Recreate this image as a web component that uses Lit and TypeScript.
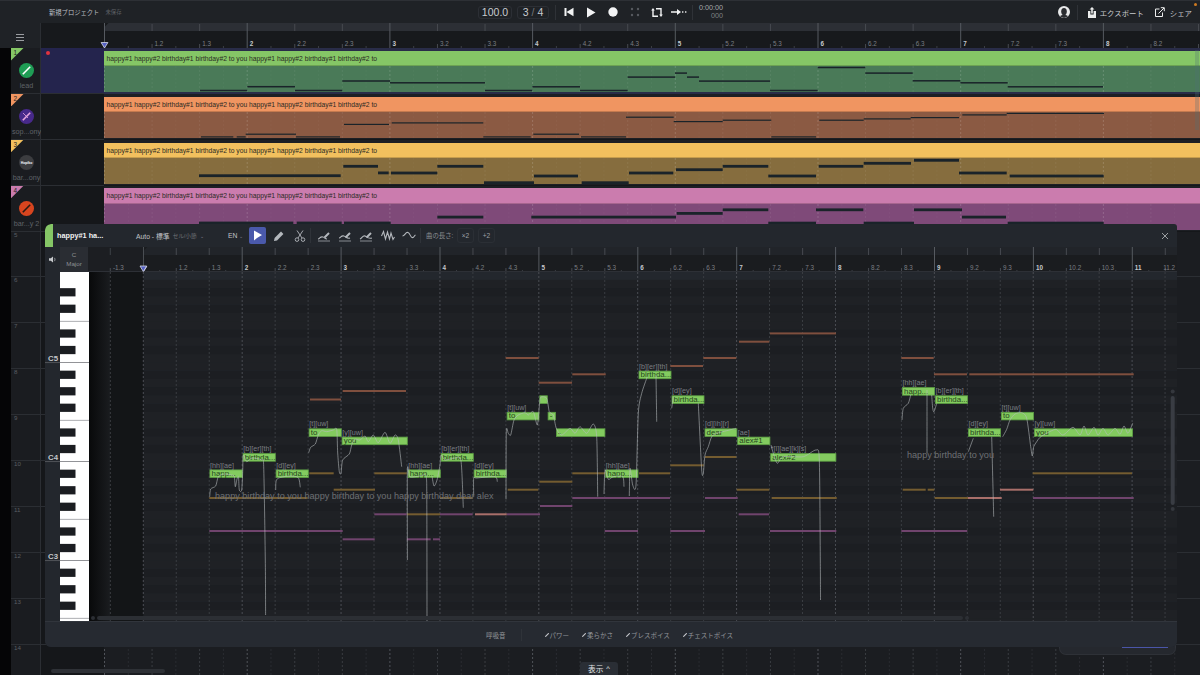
import { LitElement, html, css, svg } from 'lit';
import { customElement } from 'lit/decorators.js';

type Line = [number, number, number];

const LYRIC = 'happy#1 happy#2 birthday#1 birthday#2 to you happy#1 happy#2 birthday#1 birthday#2 to';

const TRACKS = [
  {
    name: 'lead', head: '#85c666', body: '#4a7a58', weight: 1.5, logo: '#1f9d55', slash: '#fff',
    notes: [[200, 247.3, 90.7], [247.3, 295, 86.9], [295, 342.3, 90.7], [342.3, 390, 81.2], [390, 485, 83], [485, 532.3, 90.7], [532.3, 580, 87], [580, 627.7, 90.7], [627.7, 675, 77.3], [675, 687, 73.3], [687, 699, 77.3], [699, 770, 81.3], [770, 817.7, 90.7], [817.7, 865.3, 67.7], [865.3, 912.7, 73.3], [912.7, 960.3, 81], [960.3, 1007.7, 83], [1007.7, 1103, 87]] as Line[],
  },
  {
    name: 'sop...ony', head: '#f09561', body: '#8b5a43', weight: 1.2, logo: '#47298a', slash: '#e7a6e0',
    notes: [[201, 233.3, 137], [236.7, 245.7, 137], [245.7, 296, 134.3], [296, 340, 137], [344, 389, 124.5], [391.7, 483.3, 123], [483.3, 530.7, 137], [533.3, 579, 134.3], [581, 626, 137], [626, 673.7, 117.3], [673.7, 722.7, 121.7], [722.7, 771.3, 120.3], [771.3, 816, 137], [819.3, 863.7, 120.3], [863.7, 910.7, 119], [910.7, 959, 117.7], [962.3, 1006.7, 115], [1006.7, 1104, 113.5]] as Line[],
  },
  {
    name: 'bar...ony', head: '#f2c05e', body: '#866d3e', weight: 2.8, logo: '#3c3d40', slash: '',
    notes: [[199, 340.7, 175.7], [343.3, 378, 166.3], [378, 388.7, 172.9], [391, 437.3, 173], [437.3, 483.3, 166.3], [484, 534, 182.7], [534, 578, 176], [581.7, 628.7, 182.7], [629, 673.3, 173], [676, 722.7, 169.7], [722.7, 768.3, 166.3], [768.3, 816, 176], [818.7, 863.3, 166.3], [863.7, 911, 163.3], [914, 959, 160.3], [959, 1006.7, 173], [1009.7, 1103.7, 176]] as Line[],
  },
  {
    name: 'bar...y 2', head: '#cb7cae', body: '#7f4a79', weight: 2.8, logo: '#d8451f', slash: '#2b1a12',
    notes: [[199, 293.3, 222.9], [296.7, 341.7, 222.9], [344, 390.7, 222.9], [437.3, 483.3, 217], [531.3, 676, 217], [676.7, 722.7, 213.3], [722.7, 768.3, 209.7], [768.3, 816, 223], [816, 863.3, 209.7], [863.7, 914, 223], [914, 962, 209.7], [962, 1006, 217], [1007.7, 1103.7, 223]] as Line[],
  },
];

// x0, x1, top, lyric, phonemes
const NOTES: [number, number, number, string, string][] = [
  [209.5, 242.7, 469.5, 'happ...', '[hh][ae]'],
  [242.7, 275.7, 453.2, 'birthda...', '[b][er][th]'],
  [275.7, 308.7, 469.5, 'birthda...', '[d][ey]'],
  [308.7, 341.7, 428.4, 'to', '[t][uw]'],
  [341.7, 407.7, 436.7, 'you', '[y][uw]'],
  [407.7, 440.7, 469.5, 'happ...', '[hh][ae]'],
  [440.7, 473.7, 453.2, 'birthda...', '[b][er][th]'],
  [473.7, 506.7, 469.5, 'birthda...', '[d][ey]'],
  [506.7, 539.4, 411.9, 'to', '[t][uw]'],
  [539.4, 547.7, 395.4, '', ''],
  [547.7, 556, 411.9, '-', ''],
  [556, 605.3, 428.4, '-', ''],
  [605.3, 638.4, 469.5, 'happ...', '[hh][ae]'],
  [638.6, 671.4, 370.7, 'birthda...', '[b][er][th]'],
  [671.6, 704.4, 395.4, 'birthda...', '[d][ey]'],
  [704.6, 737.3, 428.4, 'dear', '[d][ih][r]'],
  [737.3, 770.3, 436.7, 'alex#1', '[ae]'],
  [770.3, 836.3, 453.2, 'alex#2', '*[l][ae][k][s]'],
  [902, 935, 387.2, 'happ...', '[hh][ae]'],
  [935, 968, 395.4, 'birthda...', '[b][er][th]'],
  [968, 1001, 428.4, 'birthda...', '[d][ey]'],
  [1001, 1034, 411.9, 'to', '[t][uw]'],
  [1034, 1133, 428.4, 'you', '[y][uw]'],
];

const GHOSTS: Record<string, Line[]> = {
  '#7f4f3e': [[310, 341, 399.5], [342.7, 406, 391], [505.7, 538.7, 358], [538.7, 572, 382.7], [572.3, 605.7, 374.3], [670.3, 703, 366], [703.3, 736.3, 358], [739, 769.3, 341.7], [770, 836, 333.4], [901.3, 933.7, 358], [934, 967, 374.3], [969.3, 1133.7, 374.3]],
  '#745c30': [[309.3, 333.7, 473.3], [374.3, 406.7, 473.3], [333.7, 375, 489.7], [209.3, 307.7, 498], [406.7, 440, 514.3], [440, 472.3, 498], [507.7, 538.3, 489.7], [539.3, 572.3, 481.7], [572.3, 605.7, 473.3], [639, 670, 473.3], [670.3, 703.7, 465.3], [705, 736.3, 457], [736.7, 769.3, 489.7], [771.7, 836.7, 498], [902.7, 925.7, 489.7], [927.7, 934.3, 489.7], [934.7, 968, 498], [1032.7, 1132, 473.3]],
  '#70446d': [[374.3, 406.7, 514.3], [209.3, 342.7, 531], [342.7, 374.7, 539.3], [406.7, 430.7, 539.3], [433, 440, 539.3], [440, 472.7, 514.3], [506.7, 540, 514.3], [540, 572.3, 506], [572.3, 670, 498], [604.7, 638, 531], [670.3, 705, 531], [705, 737.7, 498], [738.7, 769, 514.3], [770, 836.3, 531], [901.3, 967.3, 531], [1033, 1133.7, 498]],
  '#a96f6a': [[475, 506.7, 514.3], [968, 1001.7, 498], [1000, 1033.3, 489.7]],
};

const PITCH: number[][][] = [
  [[209.7, 496.7], [210.7, 489], [215.7, 486], [218.3, 476.7], [224, 474], [231.7, 475], [234.3, 476.7], [235.3, 486.7], [237, 479], [238.5, 477], [239.3, 490], [241.7, 490], [242.7, 471.7], [243.3, 455], [246.7, 461.7], [252, 458], [261.7, 460], [263.7, 466.7], [265.3, 560], [265.6, 615]],
  [[275.7, 490], [276, 481.7], [278.7, 478], [290, 476], [298.3, 477.7], [300.3, 487.3]],
  [[308.7, 452.7], [310.7, 447.3], [315.3, 444], [318.3, 435], [321.7, 430.7], [326.7, 431.7], [333.3, 430], [336.7, 429.3], [337.7, 453], [339.3, 471.7], [341, 473.3], [342.7, 460], [349.3, 454], [351.7, 445], [355, 439.3], [360, 440], [365, 436], [368.3, 441.7], [373.3, 435], [378.3, 442.7], [385, 432.3], [390, 443.3], [395, 435], [398.3, 440], [401.7, 466.7]],
  [[407.4, 560], [407.4, 470], [410, 477], [420, 476], [426, 476], [426.8, 500], [427, 622]],
  [[432, 476], [434, 486], [437, 480], [440, 465], [441, 455], [445, 460], [455, 458], [461, 461], [463.3, 507.7]],
  [[473.7, 496.7], [473.7, 478.3], [476.7, 478], [495, 476.7], [497.3, 481.7]],
  [[506, 499.3], [506.3, 431.7], [508.3, 433.3], [510.7, 435], [514, 420], [518.3, 415], [525, 412.7], [528.3, 415], [533.3, 411.7], [537.3, 425], [539.3, 406.7], [540.7, 397.3], [546.7, 398.3], [549.3, 411.7], [553.3, 415], [556.3, 428.3], [561.7, 435], [570, 428.3], [575, 433.3], [580, 426.7], [586.7, 433.3], [593.3, 424], [596.7, 436.7], [597.7, 496.7]],
  [[604, 494], [605, 470], [608.3, 479.3], [613.3, 476.7], [622.7, 476.7], [624, 486.7]],
  [[629.3, 496], [630, 468.3], [632.7, 485], [636, 485], [638.3, 413.3], [641.7, 393.3], [647.3, 376.7]],
  [[656, 375], [656.7, 421.7]],
  [[671.7, 408.3], [673.3, 396.7]],
  [[698.3, 403.3], [701.7, 470], [703.3, 473.3], [705, 455], [708.3, 446.7], [711.7, 436.7], [716.7, 433.3], [726.7, 430.7], [736, 428.3]],
  [[771, 445], [773.3, 453.3], [777.3, 463.3], [783.3, 456.7], [803.3, 456.7], [816, 450], [819.3, 460], [820.3, 560], [820.5, 600]],
  [[902, 420], [903.3, 408.3], [908.3, 403.3], [910.7, 395]],
  [[927, 390], [927, 453]],
  [[931.7, 395], [932.7, 408.3], [934, 411.7], [936.7, 403.3]],
  [[968.3, 451.7], [973.3, 438.3]],
  [[991.7, 436.7], [993.7, 516.7]],
  [[1002.7, 436.7], [1006.7, 429.3], [1010, 420], [1015, 414], [1021.7, 412.7], [1026.7, 418.3], [1030.7, 446.7], [1032.3, 456], [1033.7, 446.7], [1036.7, 441.7], [1040, 437.3], [1046.7, 433.3], [1056, 429.3], [1063, 435], [1073, 427.3], [1080, 435], [1084, 426], [1088, 435], [1094, 427.3], [1098, 435], [1103, 428.3], [1108, 435], [1115, 428.3], [1120, 434.3], [1124, 426], [1128, 433.3], [1132.7, 423.3]],
];

const smooth = (p: number[][]) => {
  let d = `M${p[0][0]} ${p[0][1]}`;
  for (let i = 0; i < p.length - 1; i++) {
    const a = p[Math.max(i - 1, 0)], b = p[i], c = p[i + 1], e = p[Math.min(i + 2, p.length - 1)];
    d += `C${b[0] + (c[0] - a[0]) / 8} ${b[1] + (c[1] - a[1]) / 8} ${c[0] - (e[0] - b[0]) / 8} ${c[1] - (e[1] - b[1]) / 8} ${c[0]} ${c[1]}`;
  }
  return d;
};

// dashed bar lines for the arrangement view
const arrangeGrid = (y0: number, y1: number, bar: string, beat: string, half: string) => {
  const out = [];
  for (let i = 0; i < 46; i++) {
    const x = 104.5 + i * 23.783;
    const color = i % 6 === 0 ? bar : i % 2 === 0 ? beat : half;
    out.push(svg`<line x1=${x} x2=${x} y1=${y0} y2=${y1} stroke=${color} stroke-dasharray="2 2"></line>`);
  }
  return out;
};

const ruler = (x0: number, bw: number, bars: number, y0: number, h: number, band: string, low: string, xmax: number) => {
  const parts = [];
  const beat = bw / 3;
  parts.push(svg`<rect x=${x0 - 60} y=${y0} width="1400" height=${h} fill=${low}></rect>`);
  parts.push(svg`<polygon points="${x0},${y0 + 8} ${x0},${y0 + 4} ${x0 + 4},${y0} 1300,${y0} 1300,${y0 + 8}" fill=${band}></polygon>`);
  for (let b = 1; b <= bars; b++) {
    for (let i = 0; i < 3; i++) {
      const x = x0 + (b - 1) * bw + i * beat;
      if (x > xmax) continue;
      if (i === 0) {
        parts.push(svg`<line x1=${x} x2=${x} y1=${y0} y2=${y0 + h} stroke="#565a60"></line>`);
        if (b > 1) parts.push(svg`<text x=${x + 2.5} y=${y0 + 23} class="rl major">${b}</text>`);
      } else {
        parts.push(svg`<line x1=${x} x2=${x} y1=${y0 + 1} y2=${y0 + 8} stroke="#474a50"></line>`);
        parts.push(svg`<line x1=${x} x2=${x} y1=${y0 + h - 4} y2=${y0 + h} stroke="#474a50"></line>`);
        const fits = x + 15 < xmax;
        if (fits || xmax < 1190) {
          parts.push(svg`<text x=${fits ? x + 2.5 : x - 2} y=${y0 + 23} class="rl">${b}.${i + 1}</text>`);
        }
      }
      parts.push(svg`<line x1=${x + beat / 2} x2=${x + beat / 2} y1=${y0 + h - 2} y2=${y0 + h} stroke="#3c3f45"></line>`);
    }
  }
  parts.push(svg`<polygon points="${x0 - 3.4},${y0 + 19.5} ${x0 + 3.4},${y0 + 19.5} ${x0},${y0 + 25}" fill="#5661c4" stroke="#d6d9e6" stroke-width=".8"></polygon>`);
  return parts;
};

const pencilTool = (curve: string) => html`<svg width="16" height="12" viewBox="0 0 16 12" fill="none" stroke="#b4b8bd" stroke-width="1.1">
  <path d=${curve}></path><path d="M7.5 7.5L12 3" stroke-width="2"></path><path d="M1 11H13" stroke-width=".7"></path></svg>`;

@customElement('app-root')
export class AppRoot extends LitElement {
  static styles = css`
    :host {
      display: block;
      position: relative;
      width: 1200px;
      height: 675px;
      overflow: hidden;
      background: #1a1c20;
      font-family: 'Liberation Sans', 'Noto Sans CJK JP', sans-serif;
      color: #b8bbbf;
    }
    svg { display: block; flex: none; }
    .top {
      display: grid;
      grid-template-columns: 478px 1fr auto;
      height: 23px;
      box-sizing: border-box;
      background: #1f2226;
      border-top: 1px solid #2d3035;
      align-items: center;
    }
    .title { padding-left: 49px; font-size: 6.3px; color: #bcbfc3; display: flex; gap: 6px; align-items: center; }
    .title small { font-size: 5.4px; color: #5c5f64; }
    .transport { display: flex; align-items: center; }
    .box {
      height: 13px; box-sizing: border-box; border: 1px solid #2c2f35; border-radius: 3px;
      display: flex; align-items: center; justify-content: center; color: #c8cbcf; font-size: 10.5px;
    }
    .tempo { width: 34px; }
    .meter { width: 32px; margin-left: 5px; gap: 3px; }
    .meter i { color: #74777c; font-style: normal; }
    .sep { width: 1px; height: 15px; background: #2f3237; }
    .ctl { width: 22px; display: flex; justify-content: center; }
    .time { width: 25px; margin-left: 5px; text-align: right; font-size: 7.2px; line-height: 8px; color: #a5a8ac; }
    .time span { display: block; color: #7d8084; }
    .actions { display: flex; align-items: center; padding-right: 8px; font-size: 7.4px; color: #c8cbcf; }
    .actions .sep { margin: 0 9px 0 7px; }
    .act { display: flex; align-items: center; gap: 3px; }
    .act + .act { margin-left: 11px; gap: 5px; }
    .badge { position: absolute; left: 1194px; top: 3px; width: 3px; height: 3px; border-radius: 50%; background: #d07a20; }

    .rulerrow { display: flex; height: 25px; background: #17191c; }
    .menu { width: 41px; box-sizing: border-box; border-right: 1px solid #2b2e33; background: #1f2226; display: flex; align-items: center; justify-content: center; padding-top: 3px; }
    .menu div { width: 8px; height: 5px; border-top: 1px solid #9a9da1; border-bottom: 1px solid #9a9da1; position: relative; }
    .menu div::after { content: ''; position: absolute; left: 0; right: 0; top: 2px; height: 1px; background: #9a9da1; }
    .rulerrow .pad { width: 55px; }
    .rl { font: 6.3px 'Liberation Sans', sans-serif; fill: #7b7e83; }
    .rl.major { fill: #c6c9cd; font-weight: 700; }

    .row { display: flex; height: 45.9px; }
    .gutter { width: 11px; background: #050506; flex: none; }
    .head {
      position: relative; width: 30px; flex: none; box-sizing: border-box; padding-left: 2px;
      border-right: 1px solid #2b2e33; border-bottom: 1px solid #2b2e33; background: #1a1c20;
      display: flex; flex-direction: column; align-items: center;
    }
    .tag {
      position: absolute; left: 0; top: 0; width: 12.5px; height: 12.5px;
      clip-path: polygon(0 0, 100% 0, 0 100%);
      font-size: 6.4px; line-height: 10px; padding-left: 2.5px; box-sizing: border-box; color: #222;
    }
    .num { position: absolute; left: 3px; top: 0; font-size: 6.2px; line-height: 6px; color: #5b5e63; }
    .logo { margin-top: 15px; }
    .name { margin-top: 3px; font-size: 7.2px; color: #5f6267; white-space: nowrap; }
    .lane { width: 63px; flex: none; box-sizing: border-box; background: #15171a; border-bottom: 1px solid #2b2e33; position: relative; }
    .lane.on { background: #24244d; }
    .lane.on::after {
      content: ''; position: absolute; left: 5px; top: 3px; width: 4px; height: 4px; border-radius: 50%;
      background: #e2333f;
    }
    .timeline { flex: 1; min-width: 0; box-sizing: border-box; border-bottom: 1px solid #2b2e33; background: #1b1d21; }
    .timeline.dim { background: #1d1f24; border-bottom-color: #15171a; padding-top: 2.8px; }
    .timeline.on { background: #292c48; border-bottom: none; padding-top: 2.8px; }
    .clip-head {
      height: 15.4px; line-height: 15.4px; padding-left: 2.5px; font-size: 6.75px; color: #2a2a24; white-space: nowrap;
      box-sizing: border-box; border-bottom: 1px solid rgba(0, 0, 0, .18);
    }
    .vscroll { position: absolute; left: 1194.5px; top: 50px; width: 4px; height: 80px; background: rgba(80, 110, 120, .28); }

    .behind {
      position: absolute; left: 1060px; top: 640px; width: 115px; height: 14px; box-sizing: border-box;
      background: #25282e; border-radius: 0 0 6px 6px; box-shadow: 0 0 0 1px #2e3137;
    }
    .behind::after { content: ''; position: absolute; left: 62px; right: 7px; bottom: 6px; height: 1px; background: #4a55a8; }

    .editor {
      position: absolute; left: 45px; top: 224px; width: 1132px; height: 423px;
      display: flex; flex-direction: column; overflow: hidden;
      background: #23272d; border-radius: 6px 3px 6px 6px;
    }
    .ebar { display: flex; align-items: center; height: 23px; flex: none; font-size: 6.8px; }
    .tab { width: 8px; align-self: stretch; background: #85c666; border-radius: 6px 0 0 0; }
    .name-edit { width: 83px; box-sizing: border-box; padding-left: 4px; color: #f0f1f2; font-weight: 700; font-size: 7.3px; }
    .mode { width: 92px; color: #c0c3c7; display: flex; gap: 3px; align-items: center; }
    .mode small { font-size: 5.6px; color: #6e7176; }
    .lang { width: 19px; color: #c0c3c7; }
    .chev { font-size: 5px; color: #85888d; }
    .tool { width: 21px; height: 17px; display: flex; align-items: center; justify-content: center; }
    .tool.sel svg { background: #4a59ab; border-radius: 2px; }
    .tsep { width: 1px; height: 15px; background: #2f3339; }
    .gap4 { width: 3.5px; }
    .len { margin-left: 5.5px; width: 31px; color: #8b8e93; font-size: 6.4px; white-space: nowrap; }
    .mini {
      width: 17px; height: 15px; box-sizing: border-box; border: 1px solid #2b2f35; border-radius: 3px;
      margin-right: 4px; color: #9da0a5; font-size: 6.6px; display: flex; align-items: center; justify-content: center;
    }
    .close { margin-left: auto; margin-right: 8px; }
    .erow { display: flex; height: 25px; flex: none; }
    .spk { width: 15px; display: flex; align-items: center; justify-content: center; }
    .scale {
      width: 28px; background: #2a2d33; text-align: center; font-size: 6.2px; line-height: 9px; color: #8d9095;
      padding-top: 3px; box-sizing: border-box;
    }
    .mid { display: flex; height: 349px; flex: none; }
    .kl { font: 700 7.8px 'Liberation Sans', sans-serif; fill: #c3c6ca; }
    .ph { font: 7.2px 'Liberation Sans', sans-serif; fill: #7a7d82; }
    .ly { font: 7.9px 'Liberation Sans', sans-serif; fill: #26451d; }
    .sung { font: 9.1px 'Liberation Sans', sans-serif; fill: #6d7074; }
    .foot {
      flex: 1; display: flex; align-items: center; box-sizing: border-box; padding-left: 441px;
      border-top: 1px solid #31353c; background: #262a31; font-size: 6.5px; color: #92959a;
    }
    .foot .tsep { height: 12px; margin: 0 23px 0 15px; }
    .fx { display: flex; align-items: center; gap: 1px; margin-right: 13px; }
    .show {
      position: absolute; left: 580px; top: 662px; width: 38px; height: 13px;
      background: #2a2e35; border-radius: 3px 3px 0 0; color: #e4e5e7; font-size: 7.6px;
      display: flex; align-items: center; justify-content: center; gap: 3px;
    }
    .hscroll { position: absolute; left: 51px; top: 669px; width: 114px; height: 4px; border-radius: 2px; background: #2e3136; }
  `;

  private renderLogo(i: number, logo: string, slash: string) {
    return html`<svg class="logo" width="15" height="15" viewBox="0 0 15 15">
      <circle cx="7.5" cy="7.5" r="7.5" fill=${logo}></circle>
      ${slash
        ? svg`<path d="M3.8 11.2L11.2 3.8" stroke=${slash} stroke-width="1.6"></path>`
        : svg`<text x="7.5" y="8.8" text-anchor="middle" font-size="3.4" font-weight="700" fill="#fff" font-family="Liberation Sans">Hopiko</text>`}
      ${i === 1 ? svg`<path d="M4 4L9 9" stroke="#e7a6e0" stroke-width=".8"></path>` : ''}
    </svg>`;
  }

  private renderTrack(t: (typeof TRACKS)[number], i: number) {
    const rowTop = 48 + i * 45.9;
    const bodyTop = rowTop + 18.2;
    return html`<div class="row">
      <div class="gutter"></div>
      <div class="head">
        <div class="tag" style="background:${t.head}">${i + 1}</div>
        ${this.renderLogo(i, t.logo, t.slash)}
        <div class="name">${t.name}</div>
      </div>
      <div class="lane ${i === 0 ? 'on' : ''}"></div>
      <div class="timeline ${i === 0 ? 'on' : 'dim'}">
        <div class="clip-head" style="background:${t.head}">${LYRIC}</div>
        <svg width="1096" height="26" viewBox="104 ${bodyTop} 1096 26">
          <rect x="104" y=${bodyTop} width="1096" height="26" fill=${t.body}></rect>
          ${arrangeGrid(bodyTop, bodyTop + 26, 'rgba(255,255,255,.16)', 'rgba(255,255,255,.07)', 'rgba(255,255,255,.03)')}
          ${t.notes.map(([a, b, y]) => svg`<rect x=${a} y=${y - t.weight / 2} width=${b - a} height=${t.weight} fill="#1a2329"></rect>`)}
        </svg>
      </div>
    </div>`;
  }

  private renderEmptyRow(n: number) {
    return html`<div class="row">
      <div class="gutter"></div>
      <div class="head"><div class="num">${n}</div></div>
      <div class="lane"></div>
      <div class="timeline">
        <svg width="1096" height="45" viewBox="104 0 1096 45">
          ${arrangeGrid(0, 45, '#505359', '#3a3d42', '#2a2c31')}
        </svg>
      </div>
    </div>`;
  }

  private renderKeys() {
    const parts = [];
    parts.push(svg`<rect x="60" y="272" width="29" height="349" fill="#fff"></rect>`);
    for (let k = -22; k < 22; k++) {
      const y = 453.15 - 8.25 * k;
      const pc = ((k % 12) + 12) % 12;
      if ([1, 3, 6, 8, 10].includes(pc)) {
        parts.push(svg`<rect x="60" y=${y} width="15.5" height="8.25" fill="#1b1d21"></rect>`);
      }
      if (pc === 0) {
        parts.push(svg`<rect x="45" y=${y + 8} width="15" height=".9" fill="#55585d"></rect>`);
        parts.push(svg`<rect x="60" y=${y + 8} width="29" height=".8" fill="#77797d"></rect>`);
      }
      if (pc === 5) parts.push(svg`<rect x="60" y=${y + 8} width="29" height=".7" fill="#8a8c90"></rect>`);
    }
    return html`<svg width="44" height="349" viewBox="45 272 44 349">
      ${parts}
      <text x="48" y="360.5" class="kl">C5</text>
      <text x="48" y="459.5" class="kl">C4</text>
      <text x="48" y="558.5" class="kl">C3</text>
    </svg>`;
  }

  private renderRoll() {
    const rows = [];
    for (let k = -22; k < 22; k++) {
      const pc = ((k % 12) + 12) % 12;
      rows.push(svg`<rect x="89" y=${453.15 - 8.25 * k} width="1088" height="8.25" fill=${[1, 3, 6, 8, 10].includes(pc) ? '#1c1e22' : '#1f2125'}></rect>`);
    }
    const lines = [];
    for (let i = -1; i < 32; i++) {
      const x = 143.3 + i * 32.96;
      lines.push(svg`<line x1=${x} x2=${x} y1="272" y2="621" stroke=${i % 3 === 0 ? '#4b4e54' : '#3a3d42'} stroke-dasharray="2 2"></line>`);
    }
    return html`<svg width="1088" height="349" viewBox="89 272 1088 349">
      ${rows}
      <rect x="110" y="272" width="33.3" height="349" fill="#131517"></rect>
      <rect x="89" y="272" width="21" height="349" fill="url(#fade)"></rect>
      <defs><linearGradient id="fade"><stop offset="0" stop-color="#08090a"></stop><stop offset="1" stop-color="#1a1c1f"></stop></linearGradient></defs>
      ${lines}
      ${Object.entries(GHOSTS).map(([c, list]) => list.map(([a, b, y]) => svg`<rect x=${a} y=${y - 1} width=${b - a} height="2" fill=${c}></rect>`))}
      ${NOTES.map(([a, b, y, l, p]) => svg`
        <rect x=${a + 0.4} y=${y + 0.4} width=${b - a - 0.8} height="7.6" fill="#83cb5f" stroke="#5c9e43" stroke-width=".8"></rect>
        <text x=${a + 2} y=${y + 6.4} class="ly">${l}</text>
        <text x=${a + 0.5} y=${y - 2} class="ph">${p}</text>`)}
      ${PITCH.map((p) => svg`<path d=${smooth(p)} fill="none" stroke="rgba(185,190,192,.58)" stroke-width="1"></path>`)}
      <text x="215" y="498.5" class="sung">happy birthday to you happy birthday to you happy birthday dear alex</text>
      <text x="907" y="457.5" class="sung">happy birthday to you</text>
      <rect x="1170.7" y="396" width="4" height="109" rx="2" fill="#393c43"></rect>
      <circle cx="1172.7" cy="391.5" r="2" fill="#34373d"></circle>
      <circle cx="1172.7" cy="509" r="2" fill="#34373d"></circle>
      <rect x="97" y="616" width="866" height="4" rx="2" fill="#2c2f34"></rect>
      <circle cx="93" cy="618" r="2" fill="#2c2f34"></circle>
      <circle cx="967" cy="618" r="2" fill="#2c2f34"></circle>
    </svg>`;
  }

  private renderTop() {
    return html`<div class="top">
      <div class="title">新規プロジェクト<small>未保存</small></div>
      <div class="transport">
        <div class="box tempo">100.0</div>
        <div class="box meter">3 <i>/</i> 4</div>
        <div class="sep" style="margin:0 2px 0 6px"></div>
        <div class="ctl"><svg width="10" height="10" viewBox="0 0 10 10" fill="#f2f3f4"><rect x="0.5" y="1" width="2" height="8"></rect><path d="M9.5 .8V9.2L2.5 5Z"></path></svg></div>
        <div class="ctl"><svg width="10" height="11" viewBox="0 0 10 11" fill="#f2f3f4"><path d="M1 .5V10.5L9.5 5.5Z"></path></svg></div>
        <div class="ctl"><svg width="10" height="10" viewBox="0 0 10 10" fill="#f2f3f4"><circle cx="5" cy="5" r="4.7"></circle></svg></div>
        <div class="ctl"><svg width="10" height="10" viewBox="0 0 10 10" fill="#585b60"><circle cx="2" cy="2" r="1.2"></circle><circle cx="8" cy="2" r="1.2"></circle><circle cx="2" cy="8" r="1.2"></circle><circle cx="8" cy="8" r="1.2"></circle></svg></div>
        <div class="ctl"><svg width="12" height="11" viewBox="0 0 12 11" fill="none" stroke="#f2f3f4" stroke-width="1.4"><path d="M5 1.8H10V8"></path><path d="M7 9.2H2V3"></path><path d="M.2 3.4H3.8L2 1ZM8.2 7.6H11.8L10 10Z" fill="#f2f3f4" stroke="none"></path></svg></div>
        <div class="ctl"><svg width="16" height="8" viewBox="0 0 16 8" fill="#f2f3f4"><path d="M0 3.3H6V1L10 4L6 7V4.7H0Z"></path><rect x="11" y="3.3" width="1.4" height="1.4"></rect><rect x="14" y="3.3" width="1.4" height="1.4"></rect></svg></div>
        <div class="sep" style="margin-left:2px"></div>
        <div class="time">0:00:00<span>000</span></div>
      </div>
      <div class="actions">
        <svg width="12" height="12" viewBox="0 0 12 12"><circle cx="6" cy="6" r="6" fill="#e8e9ea"></circle><ellipse cx="6" cy="5.6" rx="2.8" ry="3.6" fill="#2a2c30"></ellipse><path d="M2 10.5C3 8.6 9 8.6 10 10.5L6 12Z" fill="#2a2c30"></path></svg>
        <div class="sep"></div>
        <div class="act"><svg width="10" height="11" viewBox="0 0 10 11" fill="#eceded"><path d="M5 0L7.5 2.6H5.8V6.5H4.2V2.6H2.5Z"></path><path d="M1 4H3.4V7.5H6.6V4H9V11H1Z"></path></svg>エクスポート</div>
        <div class="act"><svg width="10" height="10" viewBox="0 0 10 10" fill="none" stroke="#eceded" stroke-width="1"><path d="M7.5 5.5V9.5H.5V2H4.5"></path><path d="M3.5 6.5L9 1M5.8 .7H9.3V4.2"></path></svg>シェア</div>
      </div>
    </div>
    <div class="badge"></div>
    <div class="rulerrow">
      <div class="menu"><div></div></div>
      <div class="pad"></div>
      <svg width="1104" height="25" viewBox="96 23 1104 25">${ruler(104.5, 142.7, 9, 23, 25, '#2c2f35', '#17191c', 1200)}</svg>
    </div>`;
  }

  private renderEditor() {
    const T = (inner: unknown, sel = false) => html`<div class="tool ${sel ? 'sel' : ''}">${inner}</div>`;
    return html`<div class="editor">
      <div class="ebar">
        <div class="tab"></div>
        <div class="name-edit">happy#1 ha...</div>
        <div class="mode">Auto - 標準 <small>セル/小節</small> <span class="chev">⌄</span></div>
        <div class="lang">EN <span class="chev">⌄</span></div>
        ${T(html`<svg width="17" height="17" viewBox="0 0 17 17" fill="#fff"><path d="M5 3.5V13.5L8 11L13 8Z"></path></svg>`, true)}
        ${T(html`<svg width="12" height="12" viewBox="0 0 12 12" fill="#b4b8bd"><path d="M1 11L1.6 8L8 1.6L10.4 4L4 10.4Z"></path></svg>`)}
        ${T(html`<svg width="12" height="12" viewBox="0 0 12 12" fill="none" stroke="#b4b8bd" stroke-width=".9"><circle cx="3" cy="9.6" r="1.8"></circle><circle cx="9" cy="9.6" r="1.8"></circle><path d="M4 8L9 .5M8 8L3 .5"></path></svg>`)}
        <div class="tsep"></div><div class="gap4"></div>
        ${T(pencilTool('M1 9C3 9 3 6 6 7C8 7.6 8 9 10 9'))}
        ${T(pencilTool('M1 8C3 8 3 5 6 6C8 6.6 9 9 12 8'))}
        ${T(pencilTool('M1 9C3 8 4 5 6 6C8 7 9 9 13 8'))}
        ${T(html`<svg width="14" height="11" viewBox="0 0 14 11" fill="none" stroke="#b4b8bd" stroke-width="1.1"><path d="M.5 6L2.5 1.5L4.5 9L6.5 2L8.5 9L10 3L12 9.5L13.5 7"></path></svg>`)}
        ${T(html`<svg width="14" height="11" viewBox="0 0 14 11" fill="none" stroke="#b4b8bd" stroke-width="1.1"><path d="M.5 6C3 6 3.5 1.5 6 2.5C8.5 3.5 8.5 8.5 11 7.5C12 7 12.5 5.5 13.5 5"></path></svg>`)}
        <div class="tsep"></div>
        <div class="len">曲の長さ:</div>
        <div class="mini">×2</div>
        <div class="mini">+2</div>
        <div class="close"><svg width="8" height="8" viewBox="0 0 8 8" stroke="#a8abaf" stroke-width=".9"><path d="M1 1L7 7M7 1L1 7"></path></svg></div>
      </div>
      <div class="erow">
        <div class="spk"><svg width="8" height="7" viewBox="0 0 8 7" fill="#c6c9cc"><path d="M0 2.2H1.8L4 .4V6.6L1.8 4.8H0Z"></path><path d="M5.2 1.8C6.2 2.6 6.2 4.4 5.2 5.2" fill="none" stroke="#c6c9cc" stroke-width=".7"></path></svg></div>
        <div class="scale">C<br />Major</div>
        <svg width="1089" height="25" viewBox="88 247 1089 25">
          ${ruler(143.3, 98.9, 11, 247, 25, '#212429', '#1a1c1f', 1177)}
          <rect x="88" y="247" width="55" height="25" fill="#1c1e22"></rect>
          <line x1="110.3" x2="110.3" y1="248" y2="255" stroke="#3d4046"></line>
          <line x1="110.3" x2="110.3" y1="268" y2="272" stroke="#474a50"></line>
          <text x="113" y="270" class="rl">-1.3</text>
          <rect x="88" y="271" width="1089" height="1" fill="#2d3036"></rect>
          <polygon points="140,266 146.7,266 143.3,271.5" fill="#5661c4" stroke="#d6d9e6" stroke-width=".8"></polygon>
        </svg>
      </div>
      <div class="mid">${this.renderKeys()}${this.renderRoll()}</div>
      <div class="foot">
        <span>呼吸音</span><div class="tsep"></div>
        ${['パワー', '柔らかさ', 'ブレスボイス', 'チェストボイス'].map(
          (l) => html`<div class="fx"><svg width="4" height="4" viewBox="0 0 4 4"><path d="M.3 3.7L3.7 .3" stroke="#c8cbcf" stroke-width="1.1"></path></svg>${l}</div>`,
        )}
      </div>
    </div>`;
  }

  render() {
    const rest = [];
    for (let n = 5; n <= 14; n++) rest.push(this.renderEmptyRow(n));
    return html`
      ${this.renderTop()}
      ${TRACKS.map((t, i) => this.renderTrack(t, i))}
      ${rest}
      <div class="vscroll"></div>
      <div class="behind"></div>
      ${this.renderEditor()}
      <div class="hscroll"></div>
      <div class="show">表示 <span>^</span></div>
    `;
  }
}
